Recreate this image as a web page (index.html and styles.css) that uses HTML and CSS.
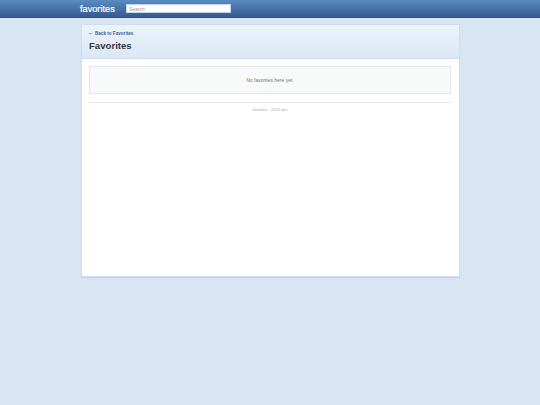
FILE: index.html
```html
<!DOCTYPE html>
<html lang="en">
<head>
<meta charset="utf-8"/>
<title>Favorites</title>
<link rel="stylesheet" href="styles.css">
</head>
<body>
<div class="topbar">
<div class="topbar-inner">
<a class="logo" href="#">favorites</a>
<input class="search" placeholder="Search" type="text"/>
</div>
</div>
<div class="panel">
<div class="panel-head">
<a class="back" href="#"><span class="arrow">←</span> Back to Favorites</a>
<h1>Favorites</h1>
</div>
<div class="panel-body">
<div class="empty">No favorites here yet.</div>
<div class="footer">favorites · 2019 dev</div>
</div>
</div>
</body>
</html>
```

FILE: styles.css
```css
* {
    margin: 0;
    padding: 0;
    box-sizing: border-box;
}

body {
    font-family: "Liberation Sans", Arial, sans-serif;
    background: #d8e5f3;
    min-height: 405px;
}

a {
    text-decoration: none;
}

.topbar {
    height: 18px;
    background: linear-gradient(#5a8cc2, #35598f);
    border-bottom: 1px solid #2f5288;
}

.topbar-inner {
    width: 380px;
    margin: 0 auto;
    display: flex;
    align-items: center;
    height: 17px;
}

.logo {
    width: 46px;
    color: #fff;
    font-size: 9.2px;
    font-weight: normal;
    -webkit-text-stroke: 0.2px #fff;
}

.search {
    width: 105px;
    height: 9px;
    border: 1px solid #c5d3e6;
    background: #fff;
    font-family: inherit;
    font-size: 5px;
    padding-left: 2px;
}

.search::placeholder {
    color: #999;
}

.panel {
    width: 379px;
    height: 253px;
    margin: 6px 0 0 81px;
    background: #fff;
    border: 1px solid #cfdeee;
    box-shadow: 0 1px 1px #c6d6e8;
}

.panel-head {
    height: 34px;
    padding: 6px 7px 0;
    background: linear-gradient(#ecf3fb, #dbe7f4);
    border-bottom: 1px solid #cfdeee;
}

.back {
    display: flex;
    gap: 2px;
    align-items: center;
    color: #3f5a8c;
    font-size: 4.6px;
    font-weight: bold;
    line-height: 5px;
}

.arrow {
    width: 4px;
    font-family: "DejaVu Sans", sans-serif;
    font-size: 4.5px;
    font-weight: normal;
}

h1 {
    margin-top: 4px;
    color: #33373d;
    font-size: 9.6px;
    line-height: 12px;
}

.panel-body {
    padding: 7px 8px 0 7px;
}

.empty {
    height: 28px;
    line-height: 26px;
    text-align: center;
    color: #777;
    font-size: 5px;
    background: #f7f9fb;
    border: 1px solid #e4e6e8;
}

.footer {
    margin-top: 8px;
    padding-top: 4px;
    border-top: 1px solid #e4e6e8;
    text-align: center;
    color: #aaa;
    font-size: 4px;
    line-height: 6px;
}
```
